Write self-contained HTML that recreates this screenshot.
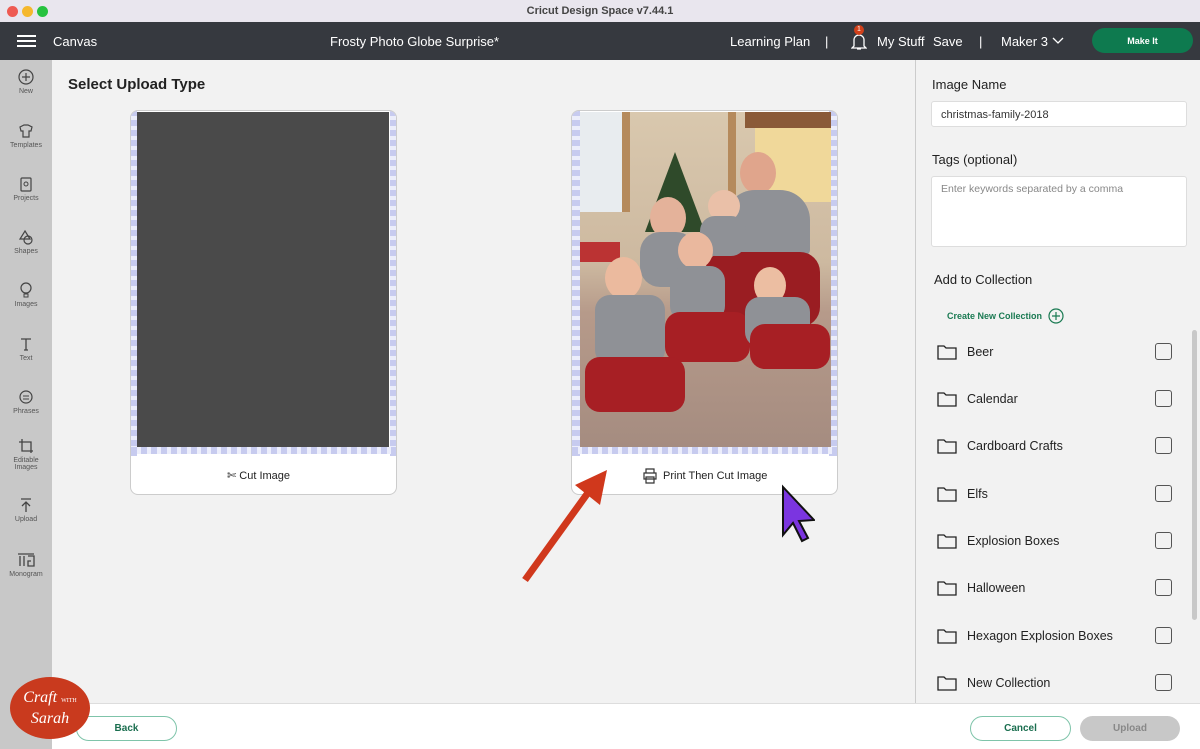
<!DOCTYPE html>
<html><head><meta charset="utf-8">
<style>
*{box-sizing:border-box;margin:0;padding:0}
body{width:1200px;height:749px;overflow:hidden;font-family:"Liberation Sans",sans-serif;background:#f2f2f2;position:relative;color:#222}
.abs{position:absolute}
.tb{left:0;top:0;width:1200px;height:22px;background:#e9e6ee;text-align:center;font-size:11px;font-weight:bold;color:#444;line-height:22px}
.dot{top:6px;width:11px;height:11px;border-radius:50%}
.nav{left:0;top:22px;width:1200px;height:38px;background:#36393f;color:#fff;font-size:13px}
.nav span{position:absolute;top:12px}
.side{left:0;top:60px;width:52px;height:689px;background:#c8c8c8}
.si{position:absolute;left:0;width:52px;text-align:center;font-size:7px;color:#555}
.si svg{display:block;margin:0 auto 3px}
.card{background:#fff;border:1.5px solid #ccc;border-radius:8px}
.chk{background-image:repeating-linear-gradient(0deg,#c7cbef 0 6px,#eceefb 6px 10px)}
.chkh{background-image:repeating-linear-gradient(90deg,#c7cbef 0 6px,#eceefb 6px 10px)}
.rp{left:915px;top:60px;width:285px;height:643px;background:#f2f2f2;border-left:1px solid #ccc}
.lbl{font-size:13px;color:#222}
.inp{background:#fff;border:1px solid #ddd;border-radius:3px;font-size:11px}
.row{position:absolute;left:937px;width:240px;height:20px;font-size:12.5px}
.row .f{position:absolute;left:0;top:2px}
.row .t{position:absolute;left:30px;top:3px}
.row .c{position:absolute;left:218px;top:1px;width:17px;height:17px;border:1.3px solid #555;border-radius:3px}
.foot{left:52px;top:703px;width:1148px;height:46px;background:#fff;border-top:1px solid #ddd}
.btn{position:absolute;height:25px;border-radius:13px;font-size:10px;font-weight:bold;text-align:center;line-height:24px}
</style></head><body>
<div class="abs tb">Cricut Design Space  v7.44.1</div>
<div class="abs dot" style="left:7px;background:#ee5a52"></div>
<div class="abs dot" style="left:22px;background:#f5b82d"></div>
<div class="abs dot" style="left:37px;background:#27c23f"></div>

<div class="abs nav">
 <div class="abs" style="left:17px;top:13px;width:19px;height:2px;background:#fff;box-shadow:0 5px 0 #fff,0 10px 0 #fff"></div>
 <span style="left:53px">Canvas</span>
 <span style="left:330px">Frosty Photo Globe Surprise*</span>
 <span style="left:730px">Learning Plan</span>
 <span style="left:825px">|</span>
 <svg class="abs" style="left:851px;top:9px" width="16" height="20" viewBox="0 0 16 20"><path d="M3 15V9a5 5 0 0 1 10 0v6l2 2H1z M6 18h4" fill="none" stroke="#fff" stroke-width="1.3"/></svg>
 <div class="abs" style="left:854px;top:3px;width:10px;height:10px;border-radius:50%;background:#d2401a;font-size:7px;text-align:center;line-height:10px">1</div>
 <span style="left:877px">My Stuff</span>
 <span style="left:933px">Save</span>
 <span style="left:979px">|</span>
 <span style="left:1001px">Maker 3</span>
 <svg class="abs" style="left:1052px;top:15px" width="12" height="8"><path d="M1 1l5 5 5-5" fill="none" stroke="#fff" stroke-width="1.3"/></svg>
 <div class="abs" style="left:1092px;top:6px;width:101px;height:25px;border-radius:13px;background:#0e7a4f;font-size:9px;font-weight:bold;text-align:center;line-height:27px">Make It</div>
</div>

<div class="abs side">
 <div class="si" style="top:9px"><svg width="16" height="16"><circle cx="8" cy="8" r="7" fill="none" stroke="#444" stroke-width="1.2"/><path d="M8 4v8M4 8h8" stroke="#444" stroke-width="1.2"/></svg>New</div>
 <div class="si" style="top:63px"><svg width="16" height="16"><path d="M2 4l4-2h4l4 2-1 4h-2v6H5V8H3z" fill="none" stroke="#444" stroke-width="1.2"/></svg>Templates</div>
 <div class="si" style="top:116px"><svg width="16" height="16"><rect x="3" y="2" width="10" height="13" rx="1" fill="none" stroke="#444" stroke-width="1.2"/><circle cx="8" cy="8" r="2" fill="none" stroke="#444"/></svg>Projects</div>
 <div class="si" style="top:169px"><svg width="16" height="16"><path d="M7 2l5 8H2z" fill="none" stroke="#444" stroke-width="1.2"/><circle cx="10" cy="11" r="4" fill="none" stroke="#444" stroke-width="1.2"/></svg>Shapes</div>
 <div class="si" style="top:222px"><svg width="16" height="16"><ellipse cx="8" cy="6" rx="5" ry="5" fill="none" stroke="#444" stroke-width="1.2"/><path d="M6 12h4v3H6z" fill="none" stroke="#444"/></svg>Images</div>
 <div class="si" style="top:276px"><svg width="16" height="16"><path d="M3 3h10M8 3v11M6 14h4" stroke="#444" stroke-width="1.3"/></svg>Text</div>
 <div class="si" style="top:329px"><svg width="16" height="16"><circle cx="8" cy="8" r="6" fill="none" stroke="#444" stroke-width="1.2"/><path d="M5 7h6M5 10h6" stroke="#444"/></svg>Phrases</div>
 <div class="si" style="top:378px"><svg width="16" height="16"><path d="M4 1v12h11M1 4h12v11" fill="none" stroke="#444" stroke-width="1.3"/></svg>Editable<br>Images</div>
 <div class="si" style="top:437px"><svg width="16" height="16"><path d="M3 2h10M8 5v10M4 9l4-4 4 4" fill="none" stroke="#444" stroke-width="1.3"/></svg>Upload</div>
 <div class="si" style="top:492px"><svg width="18" height="16"><path d="M1 2h16M3 4v10M7 4v10M11 4h6v10h-6v-5h3" fill="none" stroke="#444" stroke-width="1.3"/></svg>Monogram</div>
</div>

<div class="abs" style="left:68px;top:76px;font-size:15px;font-weight:bold;color:#222">Select Upload Type</div>

<div class="abs card" style="left:130px;top:110px;width:267px;height:385px;overflow:hidden">
 <div class="abs chk" style="left:0;top:0;width:6px;height:345px"></div>
 <div class="abs chk" style="right:0;top:0;width:6px;height:345px"></div>
 <div class="abs chkh" style="left:0;top:336px;width:267px;height:7px"></div>
 <div class="abs" style="left:6px;top:1px;width:252px;height:335px;background:#4a4a4a"></div>
 <div class="abs" style="left:96px;top:358px;font-size:11px">&#9988; Cut Image</div>
</div>

<div class="abs card" style="left:571px;top:110px;width:267px;height:385px;overflow:hidden">
 <div class="abs chk" style="left:0;top:0;width:8px;height:345px"></div>
 <div class="abs chk" style="right:0;top:0;width:8px;height:345px"></div>
 <div class="abs chkh" style="left:0;top:336px;width:267px;height:7px"></div>
 <div class="abs" style="left:8px;top:1px;width:251px;height:335px;overflow:hidden;background:linear-gradient(180deg,#d9c8ae 0%,#cdb9a0 45%,#b69a8a 60%,#a58c80 100%)">
  <div class="abs" style="left:0;top:0;width:50px;height:100px;background:#e8ecef;border-right:8px solid #b58a5c"></div>
  <div class="abs" style="left:175px;top:0;width:76px;height:90px;background:#f0d89a"></div>
  <div class="abs" style="left:165px;top:0;width:90px;height:16px;background:#8a5a38"></div>
  <div class="abs" style="left:148px;top:0;width:8px;height:120px;background:#b58a5c"></div>
  <div class="abs" style="left:65px;top:40px;width:0;height:0;border-left:30px solid transparent;border-right:30px solid transparent;border-bottom:80px solid #2f4a2a"></div>
  <div class="abs" style="left:0;top:130px;width:40px;height:20px;background:#b33"></div>
  <div class="abs" style="left:160px;top:40px;width:36px;height:42px;border-radius:50%;background:#e0a58c"></div>
  <div class="abs" style="left:145px;top:78px;width:85px;height:65px;border-radius:30px 30px 5px 5px;background:#8f9196"></div>
  <div class="abs" style="left:125px;top:140px;width:115px;height:75px;border-radius:20px;background:#9a1d22"></div>
  <div class="abs" style="left:70px;top:85px;width:36px;height:42px;border-radius:50%;background:#e4b29a"></div>
  <div class="abs" style="left:60px;top:120px;width:56px;height:55px;border-radius:20px;background:#8f9196"></div>
  <div class="abs" style="left:128px;top:78px;width:32px;height:32px;border-radius:50%;background:#eac0a8"></div>
  <div class="abs" style="left:120px;top:104px;width:46px;height:40px;border-radius:15px;background:#8f9196"></div>
  <div class="abs" style="left:98px;top:120px;width:35px;height:37px;border-radius:50%;background:#eab89e"></div>
  <div class="abs" style="left:90px;top:154px;width:55px;height:55px;border-radius:15px;background:#8f9196"></div>
  <div class="abs" style="left:85px;top:200px;width:85px;height:50px;border-radius:15px;background:#a71f24"></div>
  <div class="abs" style="left:174px;top:155px;width:32px;height:37px;border-radius:50%;background:#ecbea2"></div>
  <div class="abs" style="left:165px;top:185px;width:65px;height:50px;border-radius:15px;background:#8f9196"></div>
  <div class="abs" style="left:170px;top:212px;width:80px;height:45px;border-radius:15px;background:#a71f24"></div>
  <div class="abs" style="left:25px;top:145px;width:37px;height:42px;border-radius:50%;background:#ebba9e"></div>
  <div class="abs" style="left:15px;top:183px;width:70px;height:70px;border-radius:15px;background:#8f9196"></div>
  <div class="abs" style="left:5px;top:245px;width:100px;height:55px;border-radius:15px;background:#a71f24"></div>
 </div>
 <svg class="abs" style="left:70px;top:357px" width="16" height="16"><path d="M4 5V1h8v4M2 5h12v6H2zM4 9h8v6H4z" fill="#fff" stroke="#333" stroke-width="1.2"/></svg>
 <div class="abs" style="left:91px;top:359px;font-size:11px">Print Then Cut Image</div>
</div>

<svg class="abs" style="left:515px;top:465px" width="300" height="125">
 <path d="M10 115L80 18" stroke="#d0381c" stroke-width="7"/>
 <path d="M92 5L60 20L85 40z" fill="#d0381c"/>
 <path d="M268 22l0 48 10-12 9 18 6-3-9-17 15-1z" fill="#7b35e0" stroke="#111" stroke-width="2"/>
</svg>

<div class="abs rp">
 <div class="abs lbl" style="left:16px;top:17px">Image Name</div>
 <div class="abs inp" style="left:15px;top:41px;width:256px;height:26px;padding:7px 9px;color:#333">christmas-family-2018</div>
 <div class="abs lbl" style="left:16px;top:92px">Tags (optional)</div>
 <div class="abs inp" style="left:15px;top:116px;width:256px;height:71px;padding:6px 9px;color:#888;font-size:10.5px">Enter keywords separated by a comma</div>
 <div class="abs lbl" style="left:18px;top:212px">Add to Collection</div>
 <div class="abs" style="left:31px;top:251px;font-size:9px;font-weight:bold;color:#1a7a52">Create New Collection</div>
 <svg class="abs" style="left:132px;top:248px" width="16" height="16"><circle cx="8" cy="8" r="7" fill="none" stroke="#1a7a52" stroke-width="1.2"/><path d="M8 4v8M4 8h8" stroke="#1a7a52" stroke-width="1.2"/></svg>
 <div class="abs" style="left:276px;top:270px;width:5px;height:290px;border-radius:3px;background:#c8c8c8"></div>
</div>

<div class="row" style="top:342px"><svg class="f" width="20" height="16"><path d="M1 2h6l2 2h10v11H1z" fill="none" stroke="#222" stroke-width="1.3"/></svg><span class="t">Beer</span><span class="c"></span></div>
<div class="row" style="top:389px"><svg class="f" width="20" height="16"><path d="M1 2h6l2 2h10v11H1z" fill="none" stroke="#222" stroke-width="1.3"/></svg><span class="t">Calendar</span><span class="c"></span></div>
<div class="row" style="top:436px"><svg class="f" width="20" height="16"><path d="M1 2h6l2 2h10v11H1z" fill="none" stroke="#222" stroke-width="1.3"/></svg><span class="t">Cardboard Crafts</span><span class="c"></span></div>
<div class="row" style="top:484px"><svg class="f" width="20" height="16"><path d="M1 2h6l2 2h10v11H1z" fill="none" stroke="#222" stroke-width="1.3"/></svg><span class="t">Elfs</span><span class="c"></span></div>
<div class="row" style="top:531px"><svg class="f" width="20" height="16"><path d="M1 2h6l2 2h10v11H1z" fill="none" stroke="#222" stroke-width="1.3"/></svg><span class="t">Explosion Boxes</span><span class="c"></span></div>
<div class="row" style="top:578px"><svg class="f" width="20" height="16"><path d="M1 2h6l2 2h10v11H1z" fill="none" stroke="#222" stroke-width="1.3"/></svg><span class="t">Halloween</span><span class="c"></span></div>
<div class="row" style="top:626px"><svg class="f" width="20" height="16"><path d="M1 2h6l2 2h10v11H1z" fill="none" stroke="#222" stroke-width="1.3"/></svg><span class="t">Hexagon Explosion Boxes</span><span class="c"></span></div>
<div class="row" style="top:673px"><svg class="f" width="20" height="16"><path d="M1 2h6l2 2h10v11H1z" fill="none" stroke="#222" stroke-width="1.3"/></svg><span class="t">New Collection</span><span class="c"></span></div>

<div class="abs foot">
 <div class="btn" style="left:24px;top:12px;width:101px;border:1.5px solid #7fc4aa;color:#1a6e4f">Back</div>
 <div class="btn" style="left:918px;top:12px;width:101px;border:1.5px solid #7fc4aa;color:#1a6e4f">Cancel</div>
 <div class="btn" style="left:1028px;top:12px;width:100px;background:#c8c8c8;color:#888;line-height:26px">Upload</div>
</div>

<div class="abs" style="left:10px;top:677px;width:80px;height:62px;border-radius:50%;background:#c93a1e;color:#fff;font-family:'Liberation Serif',serif;font-style:italic;font-size:16px;line-height:17px;text-align:center;padding-top:12px">Craft <span style="font-size:6px;font-style:normal">WITH</span><br>Sarah</div>
</body></html>
